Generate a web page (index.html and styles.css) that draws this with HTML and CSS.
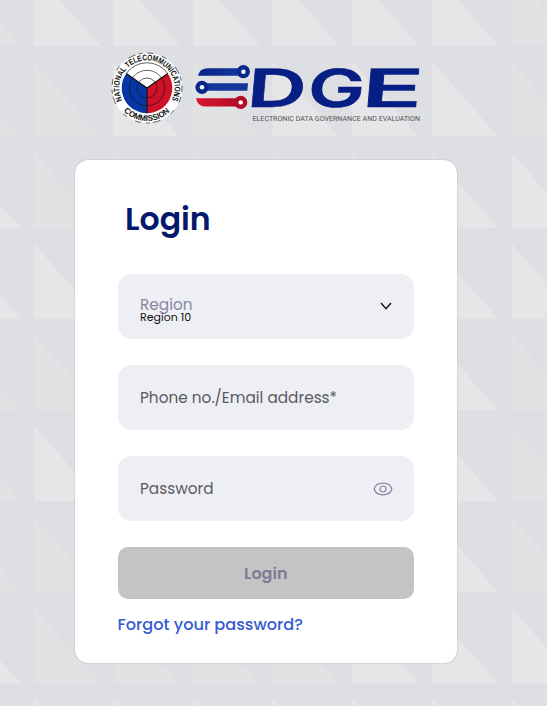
FILE: index.html
```html
<!DOCTYPE html>
<html lang="en">
<head>
<meta charset="utf-8">
<title>EDGE Login</title>
<link rel="stylesheet" href="styles.css">
</head>
<body>
<svg class="backdrop" width="547" height="706" aria-hidden="true">
  <defs>
    <path id="t" d="M0 0V-75L66 0Z"/>
    <pattern id="tiles" width="79.6" height="91.1" patternUnits="userSpaceOnUse" patternTransform="translate(34 45.5)">
      <path class="dim" d="M0 91.1V16.1L66 91.1Z"/>
    </pattern>
  </defs>
  <rect width="547" height="706" fill="url(#tiles)"/>
  <g class="lit">
    <use href="#t" x="34" y="45.5"/><use href="#t" x="113.6" y="45.5"/><use href="#t" x="193.2" y="45.5"/><use href="#t" x="272.8" y="45.5"/><use href="#t" x="352.4" y="45.5"/><use href="#t" x="432" y="45.5"/>
    <use href="#t" x="113.6" y="136.6"/><use href="#t" x="272.8" y="136.6"/><use href="#t" x="352.4" y="136.6"/><use href="#t" x="432" y="136.6"/>
    <use href="#t" x="-45.6" y="227.7"/><use href="#t" x="352.4" y="227.7"/><use href="#t" x="432" y="227.7"/><use href="#t" x="511.6" y="227.7"/>
    <use href="#t" x="-45.6" y="318.8"/><use href="#t" x="34" y="318.8"/><use href="#t" x="432" y="318.8"/><use href="#t" x="511.6" y="318.8"/>
    <use href="#t" x="432" y="409.9"/><use href="#t" x="34" y="501"/><use href="#t" x="432" y="501"/><use href="#t" x="432" y="592.1"/>
    <use href="#t" x="-45.6" y="683.2"/><use href="#t" x="352.4" y="683.2"/><use href="#t" x="432" y="683.2"/><use href="#t" x="511.6" y="683.2"/>
    <use href="#t" x="34" y="774.3"/><use href="#t" x="113.6" y="774.3"/><use href="#t" x="193.2" y="774.3"/><use href="#t" x="272.8" y="774.3"/><use href="#t" x="352.4" y="774.3"/><use href="#t" x="432" y="774.3"/><use href="#t" x="511.6" y="774.3"/>
  </g>
</svg>
<main class="page">
  <header class="brand">
    <svg class="seal" viewBox="-36 -36 72 72" role="img" aria-label="National Telecommunications Commission">
      <defs>
        <path id="upper" d="M-24.8 12.3A27.7 27.7 0 1 1 25.2 11.5"/>
        <path id="lower" d="M-24 22.5A32.9 32.9 0 0 0 24 22.5"/>
      </defs>
      <circle r="35" fill="#fff"/>
      <circle r="35" fill="none" stroke="#222" stroke-width=".7" stroke-dasharray="4 5 6 9 5 12 8 3"/>
      <path fill="#0637a5" d="M0 0L-20.7-14.5A25.3 25.3 0 0 0 0 25.3Z"/>
      <path fill="#cf1029" d="M0 0L20.7-14.5A25.3 25.3 0 0 1 0 25.3Z"/>
      <g fill="none" stroke="#111" stroke-width=".65">
        <circle r="10"/><circle r="17.7"/><path d="M-20.7-14.5A25.3 25.3 0 0 1 20.7-14.5"/>
        <path stroke-width="1.1" d="M-20.7-14.5L0 0L20.7-14.5M0 0V25.3"/>
      </g>
      <text class="ring"><textPath href="#upper" textLength="112" lengthAdjust="spacingAndGlyphs">NATIONAL TELECOMMUNICATIONS</textPath></text>
      <text class="ring"><textPath href="#lower" startOffset="1" textLength="51" lengthAdjust="spacingAndGlyphs">COMMISSION</textPath></text>
    </svg>
    <svg class="edge" viewBox="195 52 236 76" role="img" aria-label="EDGE">
      <defs>
        <linearGradient id="blue"><stop stop-color="#072386"/><stop offset="1" stop-color="#14389d"/></linearGradient>
        <linearGradient id="red"><stop stop-color="#d91830"/><stop offset="1" stop-color="#ad0c24"/></linearGradient>
      </defs>
      <path fill="url(#blue)" d="M198 75.7Q199.5 68.3 208 68.3H245V75.7Z"/>
      <path fill="#14369b" d="M202 83.2H248L247.3 90.8H202Z"/>
      <path fill="url(#red)" d="M196 98.2H241V106.6H205Q197.5 106.3 196 98.2Z"/>
      <circle cx="243.4" cy="71.7" r="6.6" fill="#0a278c"/><circle cx="243.4" cy="71.7" r="2.2" fill="#fff"/>
      <circle cx="202" cy="87.3" r="6.6" fill="#0a278c"/><circle cx="202" cy="87.3" r="2.2" fill="#fff"/>
      <circle cx="240.7" cy="102.4" r="6.6" fill="#b30c25"/><circle cx="240.7" cy="102.4" r="2.2" fill="#fff"/>
      <g class="letters" transform="translate(0 106.5) skewX(-5)">
        <text x="246" textLength="59" lengthAdjust="spacingAndGlyphs">D</text>
        <text x="306.5" textLength="57" lengthAdjust="spacingAndGlyphs">G</text>
        <text x="360.5" textLength="61" lengthAdjust="spacingAndGlyphs">E</text>
      </g>
      <text class="tagline" x="252.5" y="121" textLength="167.5" lengthAdjust="spacingAndGlyphs">ELECTRONIC DATA GOVERNANCE AND EVALUATION</text>
    </svg>
  </header>
  <form class="card">
    <h1>Login</h1>
    <div class="field region">
      <div><span class="label">Region</span><span class="value">Region 10</span></div>
      <svg class="chevron" width="12" height="8" viewBox="0 0 12 8"><path d="M1 1L6 6.6L11 1" fill="none" stroke="#111" stroke-width="1.4"/></svg>
    </div>
    <div class="field"><span>Phone no./Email address*</span></div>
    <div class="field"><span>Password</span>
      <svg class="eye" width="20" height="14" viewBox="0 0 20 14" fill="none" stroke="#85859f" stroke-width="1.2"><path d="M1.2 7C2.2 3.2 6 1.2 10 1.2S17.8 3.2 18.8 7C17.8 10.8 14 12.8 10 12.8S2.2 10.8 1.2 7Z"/><circle cx="10" cy="7" r="3"/></svg>
    </div>
    <button type="button" disabled>Login</button>
    <a class="forgot">Forgot your password?</a>
  </form>
</main>
</body>
</html>
```
FILE: styles.css
```css
* { box-sizing: border-box; }
body {
  margin: 0;
  height: 706px;
  overflow: hidden;
  background: #dedfe3;
  font-family: Poppins, Inter, sans-serif;
}
.backdrop { position: absolute; top: 0; left: 0; z-index: -1; }
.dim { fill: #e1e2e4; }
.lit { fill: #e6e6e9; }
.page { display: flex; flex-direction: column; padding: 52px 90px 0 75px; }
.brand { display: flex; align-items: flex-start; gap: 12px; height: 108px; padding-left: 36px; }
.seal { width: 72px; height: 72px; flex: none; }
.ring { font: 700 8.2px "Liberation Sans", sans-serif; fill: #111; }
.edge { width: 236px; height: 76px; flex: none; }
.letters { font: 600 52.5px Inter, sans-serif; fill: #071f84; stroke: #071f84; stroke-width: .5; }
.tagline { font: 400 7.6px Roboto, sans-serif; fill: #555; }
.card {
  display: flex;
  flex-direction: column;
  width: 382px;
  height: 503px;
  padding: 37px 43px 0 42.5px;
  background: #fff;
  border-radius: 13px;
  box-shadow: 0 0 1.5px #9a9aa0;
}
h1 {
  margin: 0 0 33.4px 7.5px;
  font-size: 31.6px;
  line-height: 44px;
  font-weight: 600;
  color: #04196b;
}
.field {
  display: flex;
  align-items: center;
  justify-content: space-between;
  height: 64.5px;
  margin-bottom: 26.5px;
  padding: 0 21px 0 22.5px;
  border-radius: 13px;
  background: #eeeff5;
  color: #5b5b60;
  font-size: 15.3px;
}
.label, .value { display: block; }
.label { line-height: 14px; color: #8987a3; margin-top: 8px; }
.value { font-size: 11px; line-height: 11px; color: #111; }
.chevron { margin: 0 1px 2px 0; }
button {
  height: 51.5px;
  border: 0;
  border-radius: 10px;
  background: #c4c4c4;
  color: #7c7b91;
  font: 600 16px Poppins, Inter, sans-serif;
}
.forgot { margin-top: 16px; font-size: 16.15px; line-height: 20px; font-weight: 500; color: #365ad4; }
```
